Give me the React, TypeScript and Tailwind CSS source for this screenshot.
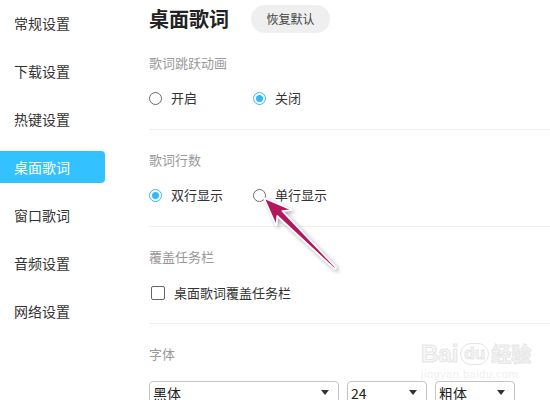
import React from "react";

const font = { fontFamily: '"Noto Sans CJK SC", "Noto Sans", sans-serif' };

function Radio({ checked, label, wide }: { checked?: boolean; label: string; wide?: boolean }) {
  return (
    <div className={`flex items-center h-5 ${wide ? "w-[104px]" : ""}`}>
      {checked ? (
        <span className="w-[13px] h-[13px] rounded-full border border-[#33b9f7] flex items-center justify-center">
          <span className="w-[7px] h-[7px] rounded-full bg-[#33b9f7]" />
        </span>
      ) : (
        <span className="w-[13px] h-[13px] rounded-full border border-[#6b6b6b]" />
      )}
      <span className="ml-[9px] text-[13px] text-[#333] leading-5">{label}</span>
    </div>
  );
}

function Select({ w, label }: { w: string; label: string }) {
  return (
    <div className={`${w} h-[28px] border border-[#c4c4c4] rounded-[4px] flex items-start justify-between pl-[3px] pr-[9px] pt-[1px]`}>
      <span className="text-[14px] text-[#222] leading-5">{label}</span>
      <span className="mt-[7px] w-0 h-0 border-l-[4px] border-r-[4px] border-t-[5px] border-l-transparent border-r-transparent border-t-[#333]" />
    </div>
  );
}

export default function App() {
  const nav = ["常规设置", "下载设置", "热键设置", "桌面歌词", "窗口歌词", "音频设置", "网络设置"];
  return (
    <div className="relative w-[550px] h-[400px] overflow-hidden bg-white flex" style={font}>
      <div className="w-[105px] shrink-0 pt-[7px] flex flex-col gap-4">
        {nav.map((n) => (
          <div
            key={n}
            className={`h-[32px] flex items-center pl-[14px] text-[14px] ${
              n === "桌面歌词" ? "bg-[#33c2ff] text-white rounded-r-[4px]" : "text-[#333]"
            }`}
          >
            {n}
          </div>
        ))}
      </div>
      <div className="ml-[44px] flex-1 pt-[5px]">
        <div className="flex items-center h-[28px]">
          <span className="text-[20px] font-bold text-[#222] leading-7">桌面歌词</span>
          <span className="ml-[22px] w-[79px] h-[28px] rounded-full bg-[#efefef] flex items-center justify-center text-[12px] text-[#444]">
            恢复默认
          </span>
        </div>
        <div className="pt-5 pb-[21px] border-b border-[#efefef]">
          <div className="h-5 text-[13px] text-[#999] leading-5">歌词跳跃动画</div>
          <div className="mt-[15px] flex">
            <Radio label="开启" wide />
            <Radio label="关闭" checked />
          </div>
        </div>
        <div className="pt-5 pb-[21px] border-b border-[#efefef]">
          <div className="h-5 text-[13px] text-[#999] leading-5">歌词行数</div>
          <div className="mt-[15px] flex">
            <Radio label="双行显示" checked wide />
            <Radio label="单行显示" />
          </div>
        </div>
        <div className="pt-5 pb-[20px] border-b border-[#efefef]">
          <div className="h-5 text-[13px] text-[#999] leading-5">覆盖任务栏</div>
          <div className="mt-[16px] flex items-center h-5 pl-[2px]">
            <span className="w-[14px] h-[14px] rounded-[2px] border border-[#666]" />
            <span className="ml-[9px] text-[13px] text-[#333] leading-5">桌面歌词覆盖任务栏</span>
          </div>
        </div>
        <div className="pt-5">
          <div className="h-5 text-[13px] text-[#999] leading-5">字体</div>
          <div className="mt-[17px] flex gap-[8px]">
            <Select w="w-[190px]" label="黑体" />
            <Select w="w-[80px]" label="24" />
            <Select w="w-[80px]" label="粗体" />
          </div>
        </div>
      </div>

      <div className="absolute left-[421px] top-[340px] pointer-events-none select-none">
        <div className="flex items-center text-[24px] font-bold leading-[28px] text-[#f6f6f6]" style={{ fontFamily: '"Liberation Sans", sans-serif', WebkitTextStroke: "1px #e6e6e6" }}>
          Bai<span className="ml-[2px] rounded-full border border-[#e6e6e6] px-[3px] text-[17px] leading-[20px]">du</span>
          <span className="ml-[2px] text-[20px]" style={font}>经验</span>
        </div>
        <div className="text-[11px] leading-[12px] text-[#efefef] tracking-[0.5px]" style={{ fontFamily: '"Liberation Sans", sans-serif' }}>
          jingyan.baidu.com
        </div>
      </div>

      <svg className="absolute left-0 top-0 pointer-events-none" width="550" height="400">
        <defs>
          <filter id="sh" x="-20%" y="-20%" width="140%" height="140%">
            <feDropShadow dx="2" dy="2" stdDeviation="2" floodColor="#000" floodOpacity="0.35" />
          </filter>
        </defs>
        <polygon
          points="264,198 291.6,209.9 282.2,210.9 335.9,267.5 334.5,268.9 277.2,215.9 276.2,225.5"
          fill="#b2195b"
          stroke="#ffffff"
          strokeWidth="1.5"
          strokeLinejoin="round"
          filter="url(#sh)"
        />
      </svg>
    </div>
  );
}
